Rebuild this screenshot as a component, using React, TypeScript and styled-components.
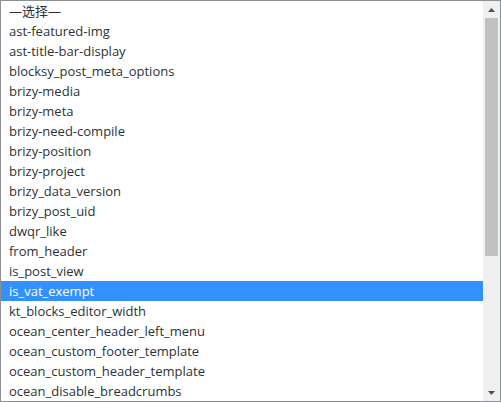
import React from "react";
import styled, { createGlobalStyle } from "styled-components";

const Global = createGlobalStyle`
  html, body { margin: 0; padding: 0; background: #fff; }
  body { font-family: "Segoe UI", "Open Sans", "Noto Sans CJK SC", sans-serif; }
`;

const ListBox = styled.div`
  box-sizing: border-box;
  width: 501px;
  height: 402px;
  border: 1px solid #8c8f94;
  display: flex;
  background: #fff;
  overflow: hidden;
`;

const OptionList = styled.div`
  flex: 1;
  display: flex;
  flex-direction: column;
  min-width: 0;
`;

const Option = styled.div<{ $selected?: boolean }>`
  height: 20px;
  line-height: 20px;
  padding: 0 8px;
  font-size: 13px;
  white-space: nowrap;
  color: ${(p) => (p.$selected ? "#ffffff" : "#2c3338")};
  background: ${(p) => (p.$selected ? "#3390ff" : "transparent")};
`;

const ScrollBar = styled.div`
  width: 17px;
  flex: none;
  display: flex;
  flex-direction: column;
  background: #f0f0f0;
`;

const ArrowButton = styled.div`
  height: 17px;
  flex: none;
  display: flex;
  align-items: center;
  justify-content: center;
`;

const Track = styled.div`
  flex: 1;
  display: flex;
  flex-direction: column;
  padding: 0 2px;
`;

const Thumb = styled.div<{ $size: number }>`
  height: ${(p) => p.$size}px;
  background: #c1c1c1;
`;

const options = [
  "—选择—",
  "ast-featured-img",
  "ast-title-bar-display",
  "blocksy_post_meta_options",
  "brizy-media",
  "brizy-meta",
  "brizy-need-compile",
  "brizy-position",
  "brizy-project",
  "brizy_data_version",
  "brizy_post_uid",
  "dwqr_like",
  "from_header",
  "is_post_view",
  "is_vat_exempt",
  "kt_blocks_editor_width",
  "ocean_center_header_left_menu",
  "ocean_custom_footer_template",
  "ocean_custom_header_template",
  "ocean_disable_breadcrumbs",
];

const Arrow = ({ up }: { up?: boolean }) => (
  <svg width="7" height="4" viewBox="0 0 7 4">
    <path d={up ? "M0 4 L3.5 0 L7 4 Z" : "M0 0 L7 0 L3.5 4 Z"} fill="#505050" />
  </svg>
);

export default function App() {
  return (
    <>
      <Global />
      <ListBox>
        <OptionList>
          {options.map((o) => (
            <Option key={o} $selected={o === "is_vat_exempt"}>
              {o}
            </Option>
          ))}
        </OptionList>
        <ScrollBar>
          <ArrowButton>
            <Arrow up />
          </ArrowButton>
          <Track>
            <Thumb $size={238} />
          </Track>
          <ArrowButton>
            <Arrow />
          </ArrowButton>
        </ScrollBar>
      </ListBox>
    </>
  );
}
